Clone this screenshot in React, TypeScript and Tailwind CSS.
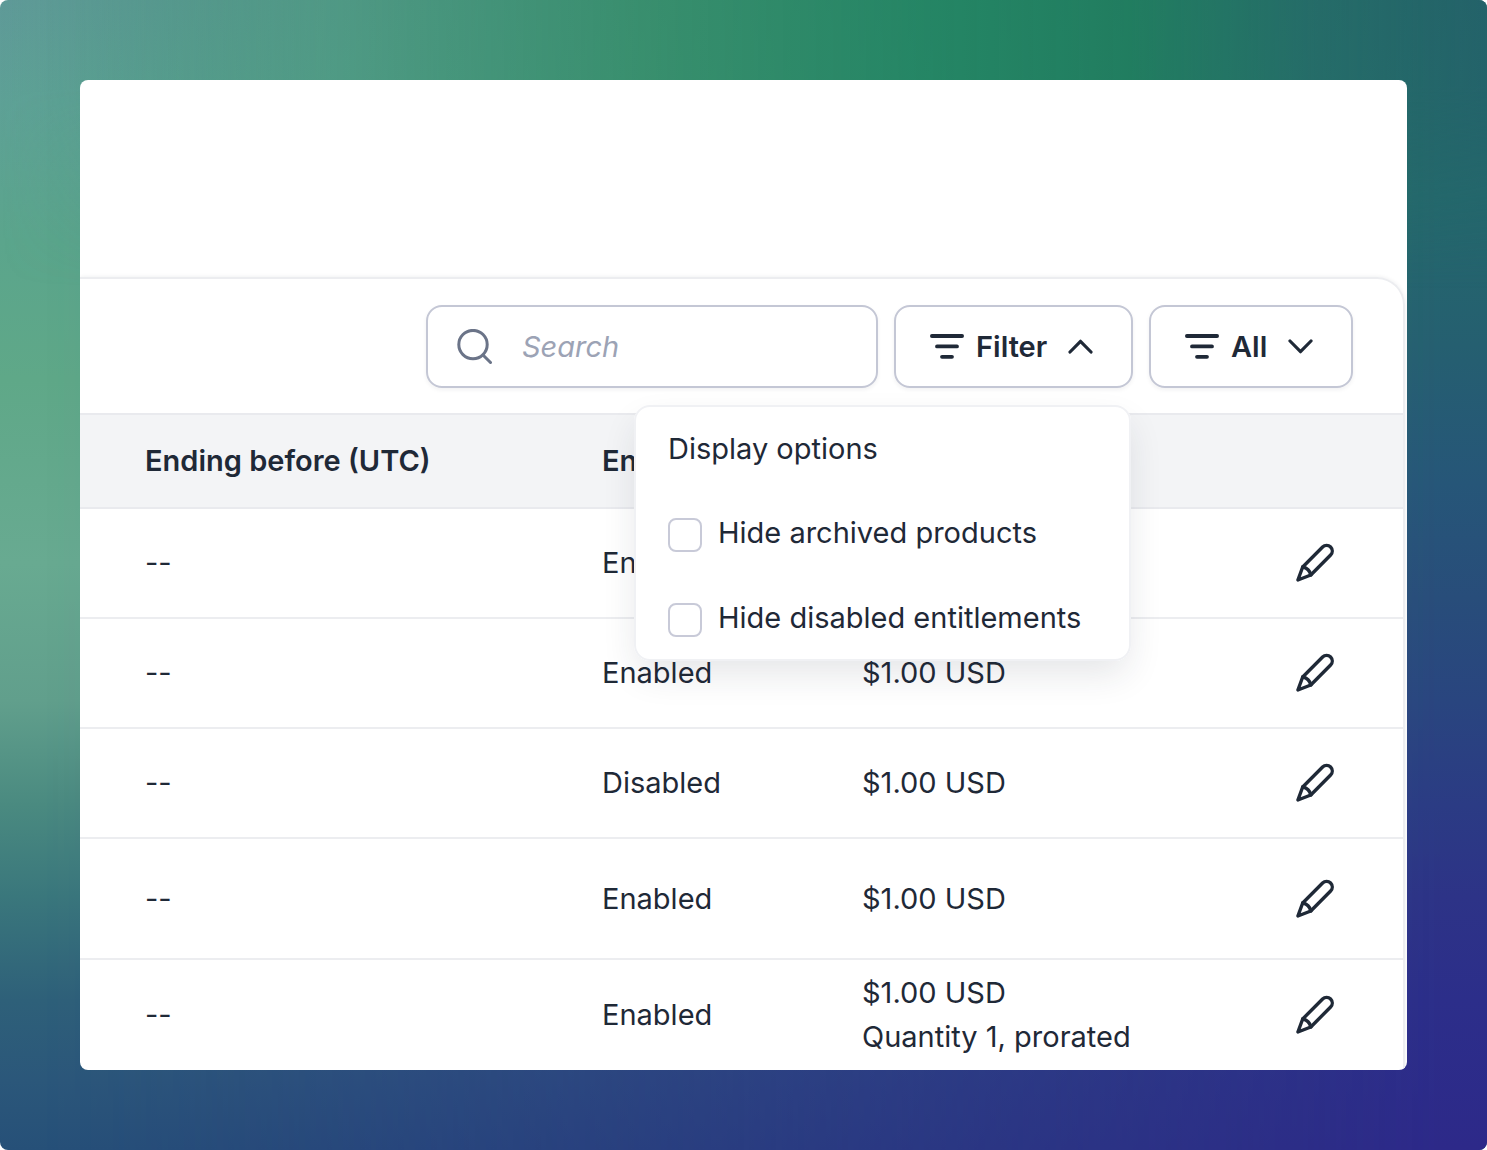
import { useState } from 'react';

interface EntitlementRow {
  id: number;
  endingBefore: string;
  status: 'Enabled' | 'Disabled';
  price?: string;
  note?: string;
  height: string;
}

const ROWS: EntitlementRow[] = [
  { id: 1, endingBefore: '--', status: 'Enabled', height: 'h-[110px]' },
  { id: 2, endingBefore: '--', status: 'Enabled', price: '$1.00 USD', height: 'h-[110px]' },
  { id: 3, endingBefore: '--', status: 'Disabled', price: '$1.00 USD', height: 'h-[110px]' },
  { id: 4, endingBefore: '--', status: 'Enabled', price: '$1.00 USD', height: 'h-[121px]' },
  { id: 5, endingBefore: '--', status: 'Enabled', price: '$1.00 USD', note: 'Quantity 1, prorated', height: 'h-[111px]' },
];

const DISPLAY_OPTIONS = [
  { id: 'hide-archived', label: 'Hide archived products' },
  { id: 'hide-disabled', label: 'Hide disabled entitlements' },
];

function SearchIcon() {
  return (
    <svg viewBox="0 0 36 36" className="size-9 shrink-0" fill="none" stroke="#6b7488" strokeWidth="3" strokeLinecap="round" aria-hidden="true">
      <circle cx="17" cy="15.6" r="14.2" />
      <path d="m27.5 26.5 7 7" />
    </svg>
  );
}

function FilterIcon() {
  return (
    <svg viewBox="0 0 34 26" className="h-[26px] w-[34px] shrink-0" fill="none" stroke="currentColor" strokeWidth="3.8" strokeLinecap="round" aria-hidden="true">
      <path d="M1.9 2h30.2M7 12.4h20M12 22.8h10" />
    </svg>
  );
}

function ChevronIcon({ up = false }: { up?: boolean }) {
  return (
    <svg viewBox="0 0 26 16" className="h-4 w-[26px] shrink-0" fill="none" stroke="currentColor" strokeWidth="3.2" strokeLinecap="round" strokeLinejoin="round" aria-hidden="true">
      <path d={up ? 'M3 13 13.5 2.3 24 13' : 'M3 2 13.5 12.7 24 2'} />
    </svg>
  );
}

function PencilIcon() {
  return (
    <svg viewBox="0 0 40 40" className="size-10" fill="none" stroke="currentColor" strokeWidth="3.4" strokeLinecap="round" strokeLinejoin="round" aria-hidden="true">
      <path d="M7.7 24 27.6 4a5.65 5.65 0 0 1 8 8L15.8 32 2.9 37z" />
      <path d="M7.7 24c4.2.9 7.2 3.8 8.1 8" />
    </svg>
  );
}

function Backdrop() {
  return (
    <div aria-hidden="true" className="absolute inset-0 -z-10 overflow-hidden rounded-lg bg-[linear-gradient(to_bottom,#5f9a98_0%,#5ea196_9%,#5ba58c_21%,#5fa888_33%,#68aa91_49%,#619f8c_61%,#4a8a80_70%,#3a777c_78%,#2e6079_87%,#2b577a_94%,#265078_100%)]">
      <div className="absolute inset-0 bg-[linear-gradient(to_bottom,#246368_0%,#24686c_17%,#255f70_30%,#265678_42%,#284d7a_52%,#29457f_61%,#2b3b84_70%,#2d3387_78%,#2c2e8a_87%,#2d2989_100%)] [mask-image:linear-gradient(to_right,transparent_3%,black_97%)]" />
      <div className="absolute inset-x-0 top-0 h-1/4 bg-[linear-gradient(to_right,#4fa08000_0%,#4fa08099_22%,#359168cc_44%,#238663ee_63%,#1f7f5ddd_76%,#236e66aa_88%,#24626b80_100%)] [mask-image:linear-gradient(to_bottom,black_30%,transparent)]" />
    </div>
  );
}

function DisplayOptions() {
  return (
    <fieldset className="absolute top-full right-[2px] z-10 mt-[17px] flex h-64 w-[497px] flex-col rounded-2xl border-2 border-[#f0f1f4] bg-white px-8 pt-5 shadow-[0_16px_36px_-4px_rgba(31,41,55,0.12)]">
      <legend className="float-left mb-10 leading-[44px]">Display options</legend>
      <div className="flex flex-col gap-[41px]">
        {DISPLAY_OPTIONS.map((option) => (
          <label key={option.id} className="flex items-center gap-4 leading-[44px] whitespace-nowrap">
            <input type="checkbox" className="mt-1 size-[34px] shrink-0 appearance-none rounded-lg border-2 border-[#c8cad8] bg-white checked:bg-[#1f2937]" />
            {option.label}
          </label>
        ))}
      </div>
    </fieldset>
  );
}

function Toolbar() {
  const [open, setOpen] = useState(true);

  return (
    <div className="flex justify-end gap-4 pt-[26px] pr-[50px] pb-[25px] pl-8">
      <label className="flex h-[83px] w-[452px] items-center gap-[30px] rounded-2xl border-2 border-[#c4c7d5] px-7 shadow-[0_2px_4px_rgba(31,41,55,0.06)]">
        <SearchIcon />
        <input type="search" aria-label="Search" placeholder="Search" className="w-full min-w-0 bg-transparent italic outline-none placeholder:text-[#9ca3b5]" />
      </label>

      <div className="relative">
        <button
          type="button"
          aria-expanded={open}
          onClick={() => setOpen((current) => !current)}
          className="flex h-[83px] w-[239px] items-center rounded-2xl border-2 border-[#c4c7d5] pl-[34px] font-semibold shadow-[0_2px_4px_rgba(31,41,55,0.06)]"
        >
          <FilterIcon />
          <span className="mr-5 ml-3">Filter</span>
          <ChevronIcon up={open} />
        </button>
        {open && <DisplayOptions />}
      </div>

      <button
        type="button"
        className="flex h-[83px] w-[204px] items-center rounded-2xl border-2 border-[#c4c7d5] pl-[34px] font-semibold shadow-[0_2px_4px_rgba(31,41,55,0.06)]"
      >
        <FilterIcon />
        <span className="mr-5 ml-3">All</span>
        <ChevronIcon />
      </button>
    </div>
  );
}

function EntitlementTable() {
  return (
    <table className="w-full table-fixed border-collapse text-left">
      <thead>
        <tr className="h-[94px] border-y-2 border-[#e9eaee] bg-[#f3f4f6]">
          <th className="w-[489px] pl-[65px] font-semibold">Ending before (UTC)</th>
          <th className="w-[260px] pl-[33px] font-semibold">Enabled</th>
          <th aria-label="Price" />
          <th className="w-[200px]" aria-label="Actions" />
        </tr>
      </thead>
      <tbody>
        {ROWS.map((row) => (
          <tr key={row.id} className={`${row.height} border-b-2 border-[#ecedf0] last:border-b-0`}>
            <td className="pl-[65px]">{row.endingBefore}</td>
            <td className="pl-[33px]">{row.status}</td>
            <td className="pl-[33px] leading-[44px] whitespace-nowrap">
              {row.price && <p>{row.price}</p>}
              {row.note && <p>{row.note}</p>}
            </td>
            <td className="pr-[68px]">
              <button type="button" aria-label="Edit entitlement" className="ml-auto block">
                <PencilIcon />
              </button>
            </td>
          </tr>
        ))}
      </tbody>
    </table>
  );
}

export default function App() {
  return (
    <div className="bg-white font-['Inter',sans-serif] text-[29px] text-[#1f2937]">
      <div className="relative isolate min-h-screen p-20">
        <Backdrop />
        <main className="overflow-hidden rounded-lg bg-white pt-[197px]">
          <section className="mr-[2px] rounded-tr-[28px] border-t-2 border-r-2 border-[#ecedf0] shadow-[0_0_4px_rgba(31,41,55,0.08)]">
            <Toolbar />
            <EntitlementTable />
          </section>
        </main>
      </div>
    </div>
  );
}
